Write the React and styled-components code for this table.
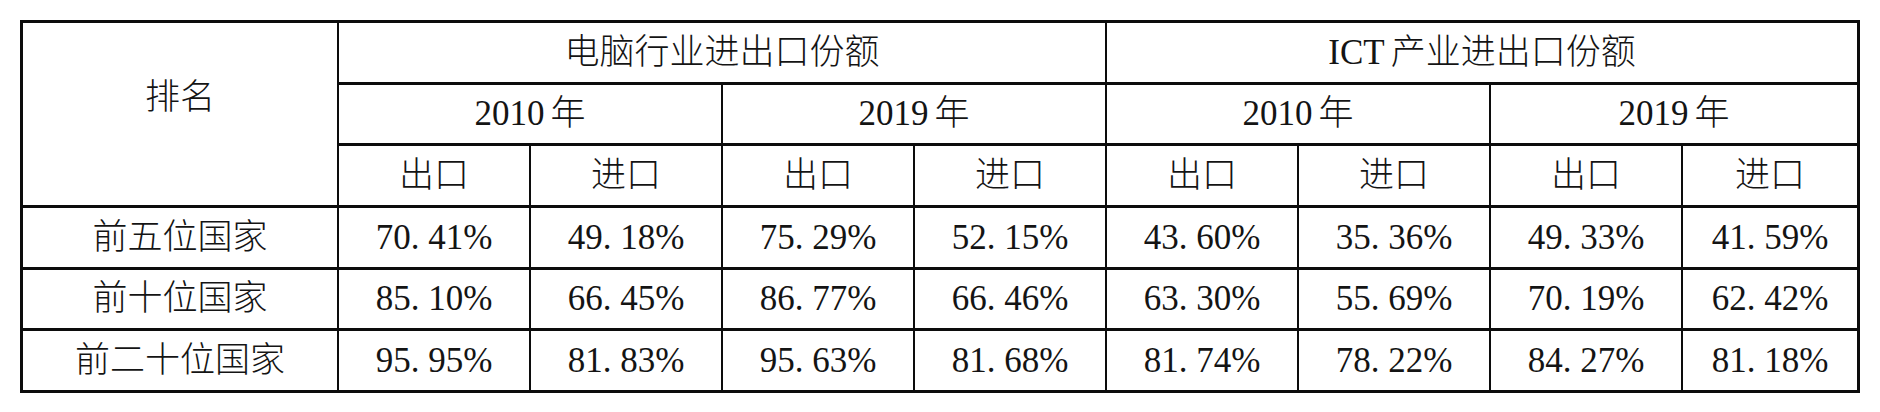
import React from 'react'
import styled, { createGlobalStyle } from 'styled-components'

const GlobalStyle = createGlobalStyle`
    html, body {
        margin: 0;
        padding: 0;
        background: #fff;
    }
    body {
        font-family: "Liberation Serif", "Noto Sans CJK SC", serif;
        color: #141414;
    }
`;

const groups = [
    { prefix: '', title: '电脑行业进出口份额' },
    { prefix: 'ICT', title: '产业进出口份额' },
]
const years = ['2010', '2019']
const flows = ['出口', '进口']

const rows = [
    { name: '前五位国家', values: ['70.41', '49.18', '75.29', '52.15', '43.60', '35.36', '49.33', '41.59'] },
    { name: '前十位国家', values: ['85.10', '66.45', '86.77', '66.46', '63.30', '55.69', '70.19', '62.42'] },
    { name: '前二十位国家', values: ['95.95', '81.83', '95.63', '81.68', '81.74', '78.22', '84.27', '81.18'] },
]

function Percent({ value }) {
    const [whole, frac] = value.split('.')
    return (
        <span>{whole}<Dot>.</Dot>{frac}%</span>
    )
}

function App() {
    return (
        <Page>
            <GlobalStyle />
            <Table>
                <RankHead>排名</RankHead>
                {groups.map(g => (
                    <GroupHead key={g.title}>
                        {g.prefix}
                        {g.prefix ? <Unit>{g.title}</Unit> : g.title}
                    </GroupHead>
                ))}
                {groups.map(g => years.map(y => (
                    <YearHead key={g.title + y}>{y}<Unit>年</Unit></YearHead>
                )))}
                {groups.map(g => years.map(y => flows.map(f => (
                    <Cell key={g.title + y + f}>{f}</Cell>
                ))))}
                {rows.map(row => (
                    <React.Fragment key={row.name}>
                        <Cell>{row.name}</Cell>
                        {row.values.map((v, i) => (
                            <Cell key={i}><Percent value={v} /></Cell>
                        ))}
                    </React.Fragment>
                ))}
            </Table>
        </Page>
    )
}

const Page = styled.div`
    padding: 20px;
    width: 1880px;
    box-sizing: border-box;
`;

const Table = styled.div`
    display: grid;
    grid-template-columns: 314px repeat(7, 190px) 174px;
    grid-template-rows: repeat(6, 1fr);
    column-gap: 2px;
    row-gap: 3px;
    width: 1840px;
    height: 373px;
    box-sizing: border-box;
    padding: 3px;
    background: #0c0c0c;
`;

const Cell = styled.div`
    display: flex;
    align-items: center;
    justify-content: center;
    background: #fff;
    font-size: 35px;
    font-weight: 300;
    line-height: 1;
    white-space: nowrap;
`;

const RankHead = styled(Cell)`
    grid-row: span 3;
    padding-bottom: 33px;
`;

const GroupHead = styled(Cell)`
    grid-column: span 4;
`;

const YearHead = styled(Cell)`
    grid-column: span 2;
`;

const Unit = styled.span`
    margin-left: 6px;
`;

const Dot = styled.span`
    margin-right: 0.25em;
`;

export default App
